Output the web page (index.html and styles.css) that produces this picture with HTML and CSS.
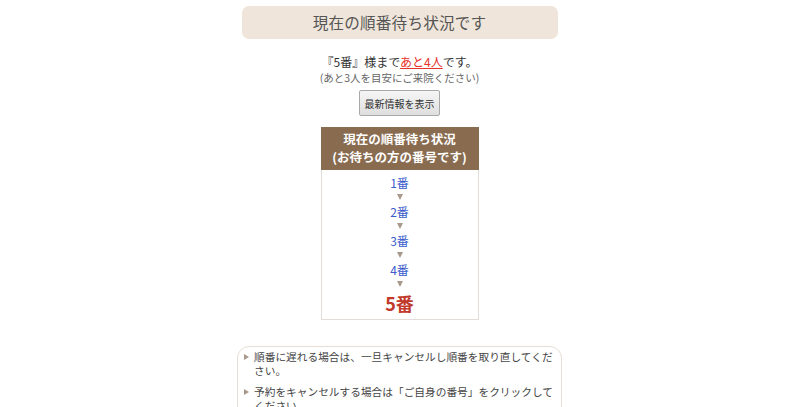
FILE: index.html
```html
<!DOCTYPE html>
<html lang="ja">
<head>
<meta charset="utf-8">
<link rel="stylesheet" href="styles.css">
</head>
<body>
<div class="page">
  <h1 class="title">現在の順番待ち状況です</h1>
  <p class="msg">『5番』様まで<span class="remain">あと4人</span>です。</p>
  <p class="sub">(あと3人を目安にご来院ください)</p>
  <button class="refresh" type="button">最新情報を表示</button>
  <div class="queue">
    <div class="queue-head">
      <div>現在の順番待ち状況</div>
      <div>(お待ちの方の番号です)</div>
    </div>
    <div class="queue-body">
      <div class="num">1番</div>
      <div class="arrow"><span></span></div>
      <div class="num">2番</div>
      <div class="arrow"><span></span></div>
      <div class="num">3番</div>
      <div class="arrow"><span></span></div>
      <div class="num">4番</div>
      <div class="arrow"><span></span></div>
      <div class="num mine">5番</div>
    </div>
  </div>
  <ul class="notes">
    <li>順番に遅れる場合は、一旦キャンセルし順番を取り直してください。</li>
    <li>予約をキャンセルする場合は「ご自身の番号」をクリックしてください。</li>
  </ul>
</div>
</body>
</html>
```
FILE: styles.css
```css
html, body {
  margin: 0;
  padding: 0;
  background: #fff;
  overflow: hidden;
}
body {
  font-family: "Noto Sans CJK JP", "Noto Sans", sans-serif;
  color: #333;
}
.page {
  display: flex;
  flex-direction: column;
  align-items: center;
  padding-right: 1px;
}
.title {
  margin: 6px 0 0;
  width: 316px;
  height: 33px;
  line-height: 33px;
  background: #efe5da;
  border-radius: 7px;
  text-align: center;
  font-size: 15.6px;
  font-weight: normal;
  letter-spacing: 0.2px;
  color: #555;
}
.msg {
  margin: 14px 0 0;
  font-size: 12px;
  line-height: 17px;
  color: #333;
}
.remain {
  color: #e8322c;
  text-decoration: underline;
}
.sub {
  margin: 0;
  font-size: 10.5px;
  line-height: 15px;
  color: #666;
}
.refresh {
  margin-top: 5px;
  width: 81px;
  height: 26px;
  padding: 0;
  font-family: inherit;
  font-size: 10px;
  color: #333;
  background: linear-gradient(#f6f6f6, #dedede);
  border: 1px solid #a9a9a9;
  border-radius: 2px;
}
.queue {
  margin-top: 11px;
  width: 158px;
  box-sizing: border-box;
  border: 1px solid #e2ddd8;
  border-top: none;
}
.queue-head {
  margin: 0 -1px;
  height: 43px;
  box-sizing: border-box;
  padding-top: 3px;
  background: #896c50;
  color: #fff;
  font-weight: bold;
  font-size: 12.5px;
  line-height: 18px;
  text-align: center;
}
.queue-body {
  padding: 5px 0 5px;
  display: flex;
  flex-direction: column;
  align-items: center;
}
.num {
  font-size: 12px;
  line-height: 15px;
  color: #3a5ccc;
}
.num.mine {
  margin-top: 1px;
  font-size: 18px;
  line-height: 22px;
  font-weight: bold;
  color: #c0392b;
}
.arrow {
  height: 14px;
  display: flex;
  align-items: center;
  justify-content: center;
}
.arrow span {
  width: 0;
  height: 0;
  border-left: 3.5px solid transparent;
  border-right: 3.5px solid transparent;
  border-top: 6px solid #a8998a;
}
.notes {
  margin: 26px 0 0;
  width: 325px;
  box-sizing: border-box;
  padding: 3px 4px 10px 16px;
  border: 1px solid #e7ddd4;
  border-radius: 12px;
  list-style: none;
  font-size: 10.7px;
  line-height: 14px;
  color: #444;
}
.notes li {
  position: relative;
  margin-bottom: 7px;
}
.notes li::before {
  content: "";
  position: absolute;
  left: -10px;
  top: 4px;
  width: 0;
  height: 0;
  border-top: 3px solid transparent;
  border-bottom: 3px solid transparent;
  border-left: 5px solid #a8998a;
}
```
